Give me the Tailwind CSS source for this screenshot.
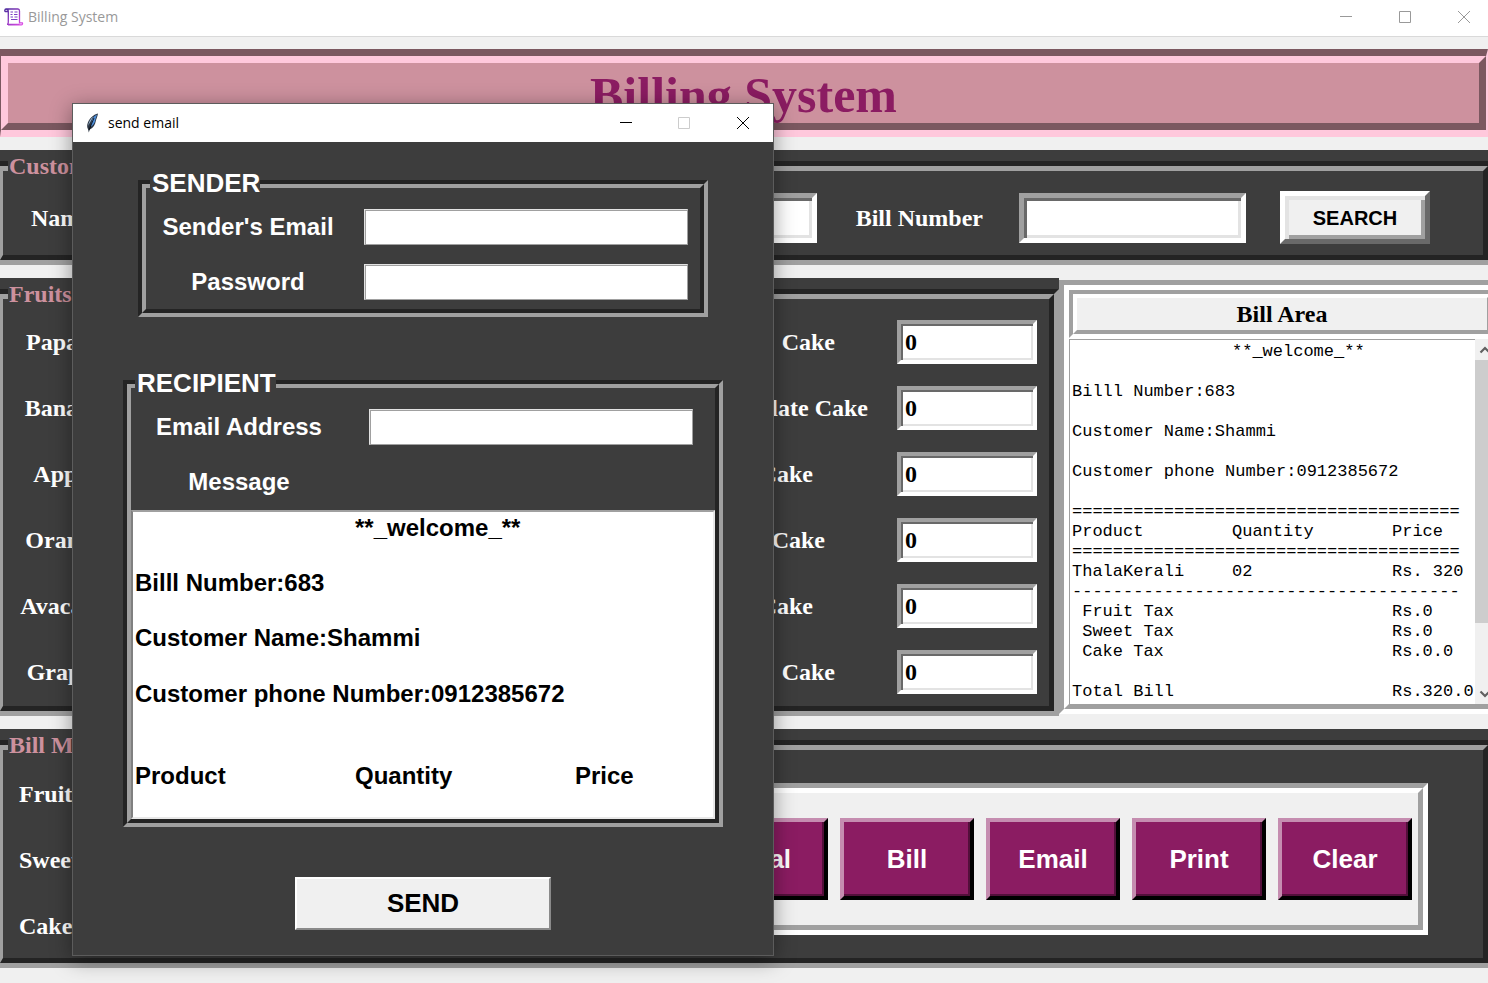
<!DOCTYPE html>
<html lang="en">
<head>
<meta charset="utf-8">
<title>Billing System</title>
<script src="https://cdn.jsdelivr.net/npm/@tailwindcss/browser@4"></script>
</head>
<body class="relative min-h-screen overflow-hidden bg-[#f0f0f0] font-['Liberation_Serif',serif] text-2xl font-bold text-white">

<header class="flex h-[37px] items-center border-b border-[#d9d9d9] bg-white pl-1 pb-[2px] font-['Open_Sans',sans-serif] text-sm font-normal text-[#999999]">
  <svg class="h-[18px] w-5" viewBox="0 0 20 18" fill="none" stroke-width="1.3" aria-hidden="true">
    <defs><linearGradient id="scroll" x1="0" y1="0" x2="1" y2="1"><stop offset="0" stop-color="#4a2a9c"/><stop offset="1" stop-color="#e04be8"/></linearGradient></defs>
    <path stroke="url(#scroll)" d="M4 3.500H1.200C.6 3.500.5 1 2 1h12c1.300 0 1.500 1 1.500 2v10.500M2 1c1.700 0 2.300 1 2.300 2.500V14c0 1.700-.3 2.300-1.300 2.300h12.500M15.500 13.500v1.300h2.800c.6 1.200 0 2-1 2H4"/>
    <path stroke="#7a3fc4" stroke-width="1" d="M6.500 4h2.500M10.500 4h3M6.500 6.500h2M10 6.500h3.500M6.500 9h2.500M10.500 9h3M7 11.500h6.500"/>
  </svg>
  <span class="ml-1">Billing System</span>
  <div class="ml-auto flex gap-[11px]">
    <button type="button" aria-label="Minimize" class="flex w-12 justify-center"><svg class="size-3" viewBox="0 0 12 12" stroke="#999"><path d="M0 5.500h12"/></svg></button>
    <button type="button" aria-label="Maximize" class="flex w-12 justify-center"><svg class="size-3" viewBox="0 0 12 12" stroke="#999" fill="none"><path d="M.5.5h11v11H.5z"/></svg></button>
    <button type="button" aria-label="Close" class="flex w-12 justify-center"><svg class="size-3" viewBox="0 0 12 12" stroke="#999"><path d="M0 0l12 12M12 0L0 12"/></svg></button>
  </div>
</header>

<main class="flex flex-col gap-[13px] pt-3">
  <div class="border-y-7 border-r-2 border-l border-t-[#7b5860] border-r-[#ffc8dc] border-b-[#ffc8dc] border-l-[#7b5860]">
    <h1 class="border-7 border-t-[#ffc8dc] border-r-[#7b5860] border-b-[#7b5860] border-l-[#ffc8dc] bg-[#cd919e] pt-1 text-center text-[50px] leading-[56px] text-[#8b1c62]">Billing System</h1>
  </div>

  <section class="relative bg-[#3d3d3d] pt-[11px]">
    <h2 class="absolute top-0 left-2 bg-[#3d3d3d] pl-px leading-8 text-[#cd919e]">Customer</h2>
    <div class="border-y-5 border-t-[#242424] border-b-[#a0a0a0]">
      <form class="flex items-center border-y-5 border-r-5 border-l-3 border-t-[#a0a0a0] border-r-[#242424] border-b-[#242424] border-l-[#a0a0a0] pt-5 pr-[53px] pb-[11px] pl-7">
        <label for="name">Name</label>
        <input id="name" class="ml-9 h-[50px] w-[160px] border-5 border-t-[#a0a0a0] border-r-white border-b-white border-l-[#a0a0a0] bg-white px-2 text-black shadow-[inset_3px_3px_0_#696969,inset_-3px_-3px_0_#e3e3e3]">
        <input aria-label="Phone number" class="ml-auto h-[50px] w-[227px] border-5 border-t-[#a0a0a0] border-r-white border-b-white border-l-[#a0a0a0] bg-white px-2 text-black shadow-[inset_3px_3px_0_#696969,inset_-3px_-3px_0_#e3e3e3]">
        <label for="billno" class="ml-[39px]">Bill Number</label>
        <input id="billno" class="ml-9 h-[50px] w-[227px] border-5 border-t-[#a0a0a0] border-r-white border-b-white border-l-[#a0a0a0] bg-white px-2 text-black shadow-[inset_3px_3px_0_#696969,inset_-3px_-3px_0_#e3e3e3]">
        <button type="button" class="ml-[34px] h-[53px] w-[150px] border-5 border-t-white border-r-[#696969] border-b-[#696969] border-l-white bg-[#f0f0f0] font-['Liberation_Sans',sans-serif] text-xl text-black shadow-[inset_4px_4px_0_#e3e3e3,inset_-4px_-4px_0_#a0a0a0]">SEARCH</button>
      </form>
    </div>
  </section>

  <div class="flex">
    <section class="relative w-[1059px] shrink-0 bg-[#3d3d3d] pt-[11px]">
      <h2 class="absolute top-0 left-2 bg-[#3d3d3d] pl-px leading-8 text-[#cd919e]">Fruits</h2>
      <div class="border-y-5 border-r-5 border-t-[#242424] border-r-[#a0a0a0] border-b-[#a0a0a0]">
        <div class="flex justify-between border-y-5 border-r-5 border-l-3 border-t-[#a0a0a0] border-r-[#242424] border-b-[#242424] border-l-[#a0a0a0] pt-[21px] pr-3 pb-3">
          <div class="grid grid-cols-[122px_140px] gap-y-[22px] text-center leading-[44px]">
            <label for="f1">Papaya</label><input id="f1" value="0" class="h-11 bg-white text-left text-black">
            <label for="f2">Banana</label><input id="f2" value="0" class="h-11 bg-white text-left text-black">
            <label for="f3">Apple</label><input id="f3" value="0" class="h-11 bg-white text-left text-black">
            <label for="f4">Orange</label><input id="f4" value="0" class="h-11 bg-white text-left text-black">
            <label for="f5">Avacado</label><input id="f5" value="0" class="h-11 bg-white text-left text-black">
            <label for="f6">Grapes</label><input id="f6" value="0" class="h-11 bg-white text-left text-black">
          </div>
          <div class="grid grid-cols-[240px_140px] gap-y-[22px] text-right leading-[44px]">
            <label for="c1" class="pr-[62px]">Cake</label><input id="c1" value="0" class="h-11 border-4 border-t-[#a0a0a0] border-r-white border-b-white border-l-[#a0a0a0] bg-white pl-1 text-black shadow-[inset_2px_2px_0_#696969,inset_-2px_-2px_0_#e3e3e3]">
            <label for="c2" class="pr-[29px]">Chocolate Cake</label><input id="c2" value="0" class="h-11 border-4 border-t-[#a0a0a0] border-r-white border-b-white border-l-[#a0a0a0] bg-white pl-1 text-black shadow-[inset_2px_2px_0_#696969,inset_-2px_-2px_0_#e3e3e3]">
            <label for="c3" class="pr-[84px]">Cake</label><input id="c3" value="0" class="h-11 border-4 border-t-[#a0a0a0] border-r-white border-b-white border-l-[#a0a0a0] bg-white pl-1 text-black shadow-[inset_2px_2px_0_#696969,inset_-2px_-2px_0_#e3e3e3]">
            <label for="c4" class="pr-[72px]">Cake</label><input id="c4" value="0" class="h-11 border-4 border-t-[#a0a0a0] border-r-white border-b-white border-l-[#a0a0a0] bg-white pl-1 text-black shadow-[inset_2px_2px_0_#696969,inset_-2px_-2px_0_#e3e3e3]">
            <label for="c5" class="pr-[84px]">Cake</label><input id="c5" value="0" class="h-11 border-4 border-t-[#a0a0a0] border-r-white border-b-white border-l-[#a0a0a0] bg-white pl-1 text-black shadow-[inset_2px_2px_0_#696969,inset_-2px_-2px_0_#e3e3e3]">
            <label for="c6" class="pr-[62px]">Cake</label><input id="c6" value="0" class="h-11 border-4 border-t-[#a0a0a0] border-r-white border-b-white border-l-[#a0a0a0] bg-white pl-1 text-black shadow-[inset_2px_2px_0_#696969,inset_-2px_-2px_0_#e3e3e3]">
          </div>
        </div>
      </div>
    </section>

    <section class="my-[2px] -mr-[17px] flex min-w-0 flex-1 border-5 border-t-[#a0a0a0] border-r-white border-b-white border-l-[#a0a0a0]">
      <div class="flex min-w-0 flex-1 flex-col border-5 border-t-white border-r-[#a0a0a0] border-b-[#a0a0a0] border-l-white bg-white">
        <div class="border-4 border-t-[#a0a0a0] border-r-white border-b-white border-l-[#a0a0a0]">
          <h2 class="border-4 border-t-white border-r-[#a0a0a0] border-b-[#a0a0a0] border-l-white bg-[#f0f0f0] text-center leading-8 text-black">Bill Area</h2>
        </div>
        <div class="mt-px flex flex-1">
          <textarea aria-label="Bill" wrap="off" readonly class="min-w-0 flex-1 resize-none overflow-hidden border-t border-l border-[#a0a0a0] bg-white pt-[2px] pl-[2px] font-['Liberation_Mono',monospace] text-[17px] leading-5 font-normal text-black [tab-size:160px]">&#9;**_welcome_**

Billl Number:683

Customer Name:Shammi

Customer phone Number:0912385672

======================================
Product&#9;Quantity&#9;Price
======================================
ThalaKerali&#9;02&#9;Rs. 320
--------------------------------------
 Fruit Tax&#9;&#9;Rs.0
 Sweet Tax&#9;&#9;Rs.0
 Cake Tax&#9;&#9;Rs.0.0

Total Bill&#9;&#9;Rs.320.0</textarea>
          <div class="flex w-5 flex-col bg-[#f0f0f0]">
            <button type="button" aria-label="Scroll up" class="flex h-[21px] items-center justify-center"><svg class="h-2 w-3" viewBox="0 0 12 8" fill="none" stroke="#606060" stroke-width="2.200"><path d="M1.500 6.500L6 2l4.500 4.500"/></svg></button>
            <div class="h-[263px] bg-[#cdcdcd]"></div>
            <button type="button" aria-label="Scroll down" class="mt-auto flex h-[21px] items-center justify-center"><svg class="h-2 w-3" viewBox="0 0 12 8" fill="none" stroke="#606060" stroke-width="2.200"><path d="M1.500 1.500L6 6l4.500-4.500"/></svg></button>
          </div>
        </div>
      </div>
    </section>
  </div>

  <section class="relative bg-[#3d3d3d] pt-[11px]">
    <h2 class="absolute top-0 left-2 bg-[#3d3d3d] pl-px leading-8 text-[#cd919e]">Bill Menu</h2>
    <div class="border-y-5 border-t-[#242424] border-b-[#a0a0a0]">
      <div class="flex justify-between border-y-5 border-r-5 border-l-3 border-t-[#a0a0a0] border-r-[#242424] border-b-[#242424] border-l-[#a0a0a0] pr-[55px] pb-[10px] pl-4">
        <div class="grid grid-cols-[150px_200px] gap-y-[22px] pt-[22px] leading-[44px]">
          <label for="t1">Fruits Tax</label><input id="t1" class="bg-white text-black">
          <label for="t2">Sweet Tax</label><input id="t2" class="bg-white text-black">
          <label for="t3">Cake Tax</label><input id="t3" class="bg-white text-black">
        </div>
        <div class="mt-[33px] self-start border-5 border-t-[#a0a0a0] border-r-white border-b-white border-l-[#a0a0a0]">
          <div class="flex gap-3 border-5 border-t-white border-r-[#a0a0a0] border-b-[#a0a0a0] border-l-white bg-[#f0f0f0] px-[6px] py-[25px] font-['Liberation_Sans',sans-serif] text-[26px]">
            <button type="button" class="h-[82px] w-[134px] border-4 border-t-[#c58db0] border-r-black border-b-black border-l-[#c58db0] bg-[#8b1c62] shadow-[inset_-2px_-2px_0_#530f3a]">Total</button>
            <button type="button" class="h-[82px] w-[134px] border-4 border-t-[#c58db0] border-r-black border-b-black border-l-[#c58db0] bg-[#8b1c62] shadow-[inset_-2px_-2px_0_#530f3a]">Bill</button>
            <button type="button" class="h-[82px] w-[134px] border-4 border-t-[#c58db0] border-r-black border-b-black border-l-[#c58db0] bg-[#8b1c62] shadow-[inset_-2px_-2px_0_#530f3a]">Email</button>
            <button type="button" class="h-[82px] w-[134px] border-4 border-t-[#c58db0] border-r-black border-b-black border-l-[#c58db0] bg-[#8b1c62] shadow-[inset_-2px_-2px_0_#530f3a]">Print</button>
            <button type="button" class="h-[82px] w-[134px] border-4 border-t-[#c58db0] border-r-black border-b-black border-l-[#c58db0] bg-[#8b1c62] shadow-[inset_-2px_-2px_0_#530f3a]">Clear</button>
          </div>
        </div>
      </div>
    </div>
  </section>
</main>

<div role="dialog" aria-label="send email" class="absolute top-[103px] left-[72px] w-[702px] border border-[#5c5c5c] bg-[#3d3d3d] font-['Liberation_Sans',sans-serif] shadow-[0_4px_20px_rgba(0,0,0,0.4)]">
  <div class="flex h-[38px] items-center bg-white pl-3 font-['Open_Sans',sans-serif] text-sm font-normal text-black">
    <svg class="h-5 w-4" viewBox="0 0 16 20" aria-hidden="true">
      <path fill="#2a3442" d="M13 .5C8.500 1.500 3.500 6 2.300 11.500c-.3 1.800 0 3.700.8 4.700l.7 3.300 1-3c3.500-1.700 5.500-5 6-8.500.5-2 1.800-5 2.200-7.500z"/>
      <path fill="#4f90dc" d="M12 1.500C9 3 7.500 5 7 8l-1.500 6c3-1.800 4.500-4.500 4.900-7.500z"/>
      <path fill="#9ab4cc" d="M8.500 3.300C5.500 6 3.500 9 3 13l2.300-4z"/>
      <path stroke="#000" stroke-width=".8" fill="none" d="M9 5L4 17"/>
    </svg>
    <span class="ml-[7px]">send email</span>
    <div class="ml-auto flex">
      <button type="button" aria-label="Minimize" class="flex w-[58px] justify-center"><svg class="size-3" viewBox="0 0 12 12" stroke="#000"><path d="M0 5.500h12"/></svg></button>
      <button type="button" aria-label="Maximize" disabled class="flex w-[58px] justify-center"><svg class="size-3" viewBox="0 0 12 12" stroke="#ccc" fill="none"><path d="M.5.5h11v11H.5z"/></svg></button>
      <button type="button" aria-label="Close" class="flex w-[60px] justify-center"><svg class="size-3" viewBox="0 0 12 12" stroke="#000"><path d="M0 0l12 12M12 0L0 12"/></svg></button>
    </div>
  </div>

  <form class="flex flex-col items-center pt-[38px] pb-[25px]">
    <div class="relative border-4 border-t-[#242424] border-r-[#a0a0a0] border-b-[#a0a0a0] border-l-[#242424]">
      <h2 class="absolute -top-4 left-2 bg-[#3d3d3d] pl-[2px] text-[26px] leading-[30px]">SENDER</h2>
      <div class="grid grid-cols-[204px_324px] gap-x-[14px] gap-y-[19px] border-4 border-t-[#a0a0a0] border-r-[#242424] border-b-[#242424] border-l-[#a0a0a0] pt-[21px] pr-3 pb-[9px] text-center leading-9">
        <label for="from">Sender's Email</label><input id="from" type="email" class="h-9 border border-t-[#e3e3e3] border-r-[#a0a0a0] border-b-[#a0a0a0] border-l-[#e3e3e3] bg-white px-2 text-left text-black shadow-[inset_1px_1px_0_#a0a0a0]">
        <label for="pass">Password</label><input id="pass" type="password" class="h-9 border border-t-[#e3e3e3] border-r-[#a0a0a0] border-b-[#a0a0a0] border-l-[#e3e3e3] bg-white px-2 text-left text-black shadow-[inset_1px_1px_0_#a0a0a0]">
      </div>
    </div>

    <div class="relative mt-[63px] border-4 border-t-[#242424] border-r-[#a0a0a0] border-b-[#a0a0a0] border-l-[#242424]">
      <h2 class="absolute -top-4 left-2 bg-[#3d3d3d] pl-[2px] text-[26px] leading-[30px]">RECIPIENT</h2>
      <div class="border-4 border-t-[#a0a0a0] border-r-[#242424] border-b-[#242424] border-l-[#a0a0a0]">
        <div class="grid grid-cols-[216px_324px] gap-x-[22px] gap-y-[19px] pt-[21px] pr-[22px] text-center leading-9">
          <label for="to">Email Address</label><input id="to" type="email" class="h-9 border border-t-[#e3e3e3] border-r-[#a0a0a0] border-b-[#a0a0a0] border-l-[#e3e3e3] bg-white px-2 text-left text-black shadow-[inset_1px_1px_0_#a0a0a0]">
          <label for="msg">Message</label>
        </div>
        <textarea id="msg" wrap="off" class="mt-[10px] block h-[309px] w-full resize-none overflow-hidden border-2 border-t-[#a0a0a0] border-r-[#e8e8e8] border-b-[#e8e8e8] border-l-[#808080] bg-white pt-[2px] pl-[2px] leading-[1.15] text-black [tab-size:220px]">&#9;**_welcome_**

Billl Number:683

Customer Name:Shammi

Customer phone Number:0912385672


Product&#9;Quantity&#9;Price</textarea>
      </div>
    </div>

    <button type="button" class="mt-[50px] h-[53px] w-64 border-2 border-t-white border-r-[#8a8a8a] border-b-[#8a8a8a] border-l-white bg-[#f0f0f0] text-[26px] text-black">SEND</button>
  </form>
</div>
</body>
</html>
